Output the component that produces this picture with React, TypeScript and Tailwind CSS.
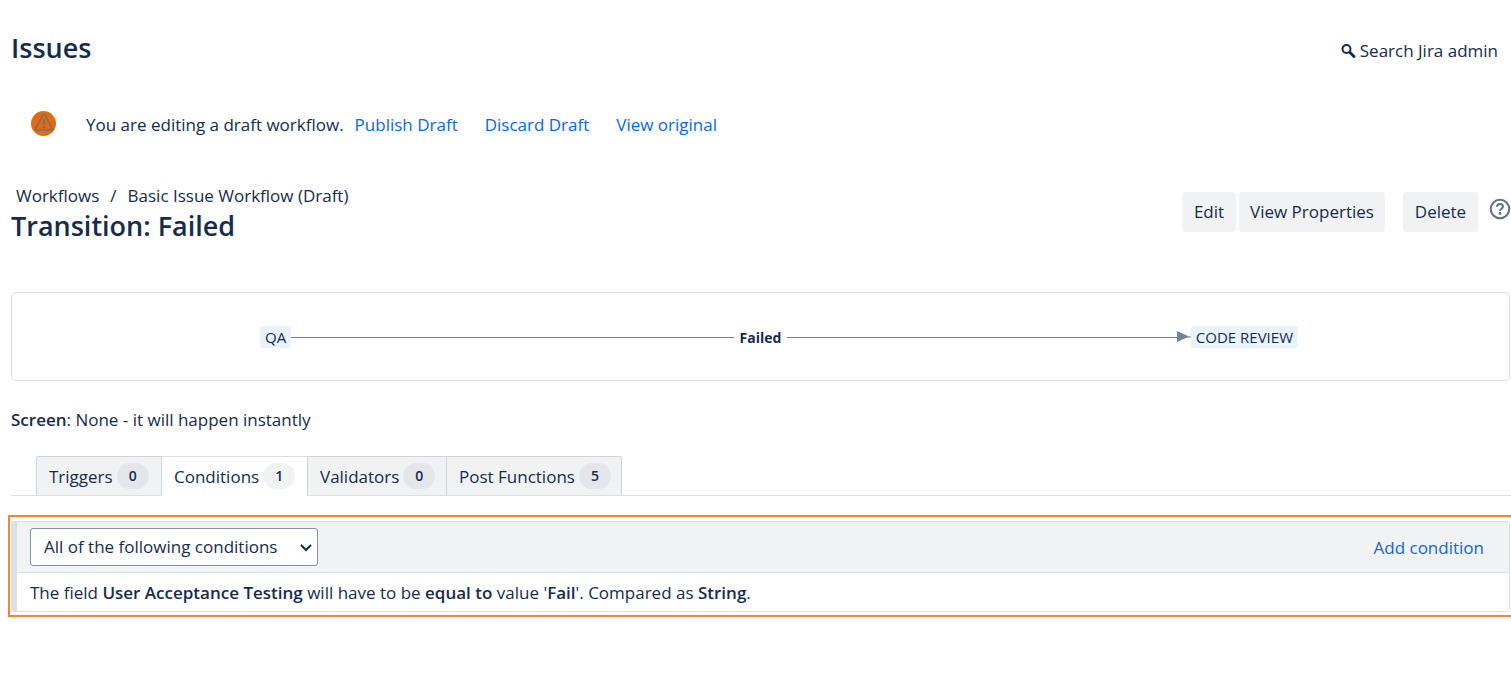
import type { ReactNode } from 'react'

interface Tab {
  label: string
  count: number
}

const TABS: Tab[] = [
  { label: 'Triggers', count: 0 },
  { label: 'Conditions', count: 1 },
  { label: 'Validators', count: 0 },
  { label: 'Post Functions', count: 5 },
]

const ACTIVE_TAB = 'Conditions'

/** Width and side borders of each tab; the active one borrows its neighbours' edges. */
const TAB_EDGES: Record<string, string> = {
  Triggers: 'w-[126px] rounded-tl-[3px] border-l border-r',
  Conditions: 'w-[145px]',
  Validators: 'w-[140px] border-l border-r',
  'Post Functions': 'w-[175px] rounded-tr-[3px] border-r',
}

function WarningIcon() {
  return (
    <svg className="h-[26px] w-[26px] shrink-0" viewBox="0 0 26 26" fill="none" aria-hidden="true">
      <circle cx="12.5" cy="12.5" r="12.5" fill="#e56910" />
      <path
        d="M11.8 4.1 4.6 17.6c-.4.8.1 1.5.9 1.5h15c.8 0 1.3-.7.9-1.5L14.200 4.100c-.5-1-1.900-1-2.400 0Z"
        stroke="#7e6f5e"
        strokeWidth="1.8"
        strokeLinejoin="round"
      />
      <path d="M13 8.500v5" stroke="#7e6f5e" strokeWidth="2.4" />
      <circle cx="13" cy="16" r="1.3" fill="#7e6f5e" />
    </svg>
  )
}

function SearchIcon() {
  return (
    <svg className="h-4 w-4" viewBox="0 0 16 16" fill="none" stroke="#172b4d" aria-hidden="true">
      <circle cx="5.5" cy="6" r="4" strokeWidth="2" />
      <path d="m9 9.5 4 4" strokeWidth="3" strokeLinecap="round" />
    </svg>
  )
}

function HelpIcon() {
  return (
    <svg className="h-[22px] w-[22px]" viewBox="0 0 22 22" fill="none" stroke="#626f86" aria-hidden="true">
      <circle cx="11" cy="11" r="9.3" strokeWidth="2" />
      <path d="M8 8.7C8 7 9.3 6 11 6s3 1 3 2.6c0 2.1-3 2.1-3 4.4" strokeWidth="2" />
      <circle cx="11" cy="15.4" r="1.4" fill="#626f86" stroke="none" />
    </svg>
  )
}

function ActionButton({ className, children }: { className: string; children: ReactNode }) {
  return (
    <button type="button" className={`h-10 whitespace-nowrap rounded-[3px] bg-[#f1f2f4] ${className}`}>
      {children}
    </button>
  )
}

function StatusLozenge({ children }: { children: ReactNode }) {
  return (
    <span className="flex h-[22px] shrink-0 items-center rounded-[3px] bg-[#e9f2ff] px-[5px] text-[15px] font-medium">
      {children}
    </span>
  )
}

function TabButton({ tab }: { tab: Tab }) {
  const active = tab.label === ACTIVE_TAB
  return (
    <button
      type="button"
      role="tab"
      aria-selected={active}
      className={`flex h-10 items-center gap-1 whitespace-nowrap border-b border-t pl-3 ${TAB_EDGES[tab.label]} ${
        active ? 'border-t-[#dcdfe4] border-b-white bg-white' : 'border-[#cfd4db] border-b-[#dcdfe4] bg-[#f1f2f4]'
      }`}
    >
      <span className="pt-0.5">{tab.label}</span>
      <span
        className={`flex h-[26px] w-8 items-center justify-center rounded-full text-sm font-semibold ${
          active ? 'bg-[#f1f2f4]' : 'bg-[#e4e6ea]'
        }`}
      >
        {tab.count}
      </span>
    </button>
  )
}

function TransitionDiagram() {
  return (
    <div className="mr-px grid h-[89px] grid-cols-[1fr_auto_1fr] items-center rounded-[5px] border border-[#dcdfe4] pt-px">
      <div className="flex items-center pl-[248px]">
        <StatusLozenge>QA</StatusLozenge>
        <div className="h-px flex-1 bg-[#758195]" />
      </div>
      <strong className="px-1.5 pt-0.5 text-sm">Failed</strong>
      <div className="flex items-center pr-[211px]">
        <div className="h-px flex-1 bg-[#758195]" />
        <svg className="h-3 w-3.5" viewBox="0 0 14 12" aria-hidden="true">
          <path d="M0 0v11L12 5.5Z" fill="#758195" />
          <path d="M0 6h14" stroke="#758195" />
        </svg>
        <StatusLozenge>CODE REVIEW</StatusLozenge>
      </div>
    </div>
  )
}

function ConditionGroup() {
  return (
    <section className="ml-2 mt-[19px] border-2 border-r-0 border-[#fb8332] py-1 pb-[3px] pl-px">
      <div className="mr-px rounded-[4px] border border-l-[6px] border-[#dcdfe4]">
        <div className="flex h-[50px] items-center justify-between bg-[#f1f2f4] pl-[13px] pr-[25px]">
          <div className="relative">
            <select
              aria-label="Condition matching"
              className="h-[38px] w-72 appearance-none rounded-[3px] border border-[#8590a2] bg-white pl-[13px]"
            >
              <option>All of the following conditions</option>
              <option>Any of the following conditions</option>
            </select>
            <svg
              className="pointer-events-none absolute right-1.5 top-3.5 h-3 w-3"
              viewBox="0 0 12 12"
              fill="none"
              stroke="#172b4d"
              strokeWidth="2"
              aria-hidden="true"
            >
              <path d="m1 3 5 5 5-5" />
            </svg>
          </div>
          <a href="#add" className="pt-0.5 text-[#0c66e4]">
            Add condition
          </a>
        </div>
        <p className="border-t border-[#dcdfe4] pb-1.5 pl-[13px] pt-2">
          The field <strong className="font-semibold">User Acceptance Testing</strong> will have to be{' '}
          <strong className="font-semibold">equal to</strong> value '
          <strong className="font-semibold">Fail</strong>'. Compared as{' '}
          <strong className="font-semibold">String</strong>.
        </p>
      </div>
    </section>
  )
}

export default function App() {
  return (
    <div className="bg-white font-['Open_Sans','Noto_Sans',sans-serif] text-[17px] leading-6 text-[#172b4d]">
      <header className="flex items-center justify-between pl-[11px] pr-[13px] pt-7">
        <h1 className="text-[27px] font-semibold leading-10">Issues</h1>
        <a href="#search" className="flex items-center gap-[3px] pt-1.5">
          <SearchIcon />
          Search Jira admin
        </a>
      </header>

      <div className="mt-[43px] flex items-start pl-[31px]">
        <WarningIcon />
        <p className="pl-[29px] pt-0.5">You are editing a draft workflow.</p>
        <nav className="flex gap-[27px] pl-[11px] pt-0.5 text-[#0c66e4]">
          <a href="#publish">Publish Draft</a>
          <a href="#discard">Discard Draft</a>
          <a href="#original">View original</a>
        </nav>
      </div>

      <div className="mt-[47px] flex items-start justify-between">
        <div>
          <nav className="flex gap-[11px] pl-4" aria-label="Breadcrumb">
            <a href="#workflows">Workflows</a>
            <span>/</span>
            <a href="#draft">Basic Issue Workflow (Draft)</a>
          </nav>
          <h2 className="pl-[11px] text-[27px] font-semibold leading-9">Transition: Failed</h2>
        </div>
        <div className="flex pt-2">
          <ActionButton className="w-[54px]">Edit</ActionButton>
          <ActionButton className="ml-[3px] w-[146px]">View Properties</ActionButton>
          <ActionButton className="ml-[18px] w-[75px]">Delete</ActionButton>
          <a href="#help" aria-label="Help" className="ml-[11px] mt-[6px]">
            <HelpIcon />
          </a>
        </div>
      </div>

      <main className="pt-12">
        <div className="pl-[11px]">
          <TransitionDiagram />
          <p className="mt-[27px]">
            <strong className="font-semibold">Screen</strong>: None - it will happen instantly
          </p>
          <div role="tablist" className="mt-6 flex items-end">
            <div className="w-[25px] border-b border-[#dcdfe4]" />
            {TABS.map((tab) => (
              <TabButton key={tab.label} tab={tab} />
            ))}
            <div className="flex-1 border-b border-[#dcdfe4]" />
          </div>
        </div>
        <ConditionGroup />
      </main>
    </div>
  )
}
